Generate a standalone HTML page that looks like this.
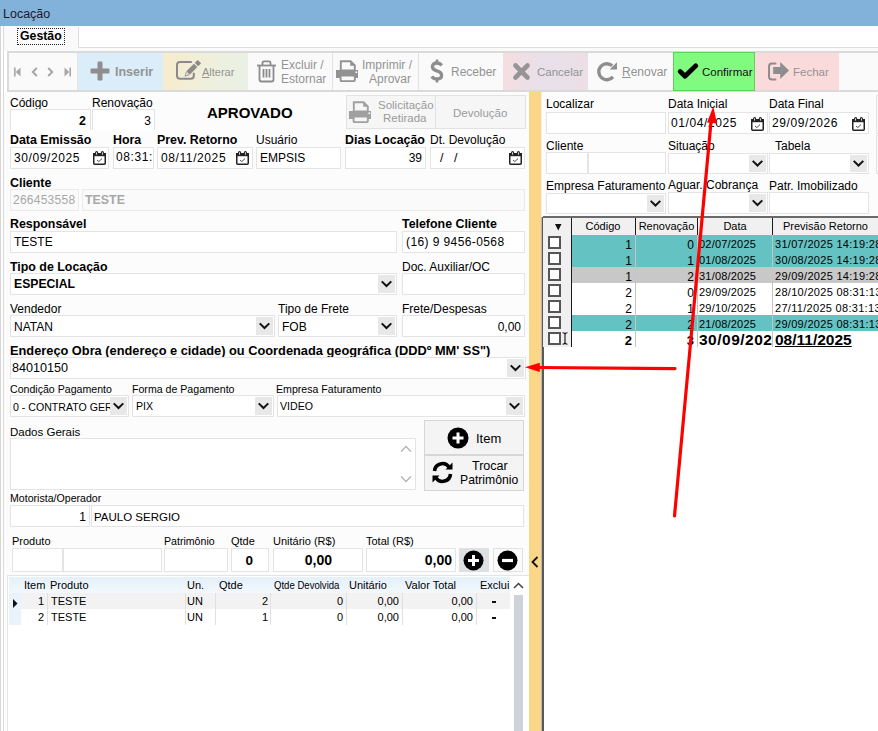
<!DOCTYPE html>
<html><head><meta charset="utf-8">
<style>
html,body{margin:0;padding:0;}
body{width:878px;height:731px;position:relative;overflow:hidden;background:#fff;font-family:"Liberation Sans",sans-serif;color:#000;}
.b{position:absolute;box-sizing:border-box;}
.t{position:absolute;white-space:nowrap;}
svg.b{overflow:visible;}
</style></head><body>

<div class="b" style="left:0px;top:0px;width:878px;height:26px;background:#82b1da;"></div>
<div class="t " style="left:3px;top:7.00px;font-size:12.5px;line-height:15.0px;color:#1a1a2a;">Locação</div>
<div class="b" style="left:0px;top:26px;width:1px;height:705px;background:#d6d6d6;"></div>
<div class="b" style="left:3px;top:26px;width:1px;height:705px;background:#dadada;"></div>
<div class="b" style="left:4px;top:26px;width:874px;height:66px;background:#ffffff;"></div>
<div class="b" style="left:4px;top:26px;width:74px;height:25px;background:#fafafa;"></div>
<div class="b" style="left:78px;top:48px;width:800px;height:3px;background:#fafafa;"></div>
<div class="b" style="left:78px;top:27px;width:1px;height:21px;background:#dedede;"></div>
<div class="b" style="left:79px;top:47px;width:799px;height:1px;background:#dedede;"></div>
<div class="b" style="left:17px;top:28px;width:48px;height:17px;border:1px dotted #222;"></div>
<div class="t " style="left:20px;top:29.00px;font-size:12.3px;line-height:14.76px;font-weight:bold;">Gestão</div>
<div class="b" style="left:7px;top:51px;width:871px;height:41px;background:#fafafa;border:2px solid #dadada;border-right:none;"></div>
<div class="b" style="left:77px;top:53px;width:1px;height:37px;background:#e6e6e6;"></div>
<svg class="b" style="left:14px;top:67px" width="7" height="10" viewBox="0 0 7 10"><rect x="0" y="0.5" width="1.6" height="9" fill="#a6a6a6"/><path d="M6.5 0.5 L1.8 5 L6.5 9.5Z" fill="#a6a6a6"/></svg>
<svg class="b" style="left:31px;top:67px" width="7" height="10" viewBox="0 0 7 10"><path d="M5.8 1 L1.8 5 L5.8 9" fill="none" stroke="#a6a6a6" stroke-width="2"/></svg>
<svg class="b" style="left:47px;top:67px" width="7" height="10" viewBox="0 0 7 10"><path d="M1.2 1 L5.2 5 L1.2 9" fill="none" stroke="#a6a6a6" stroke-width="2"/></svg>
<svg class="b" style="left:64px;top:67px" width="7" height="10" viewBox="0 0 7 10"><path d="M0.5 0.5 L5.2 5 L0.5 9.5Z" fill="#a6a6a6"/><rect x="5.4" y="0.5" width="1.6" height="9" fill="#a6a6a6"/></svg>
<div class="b" style="left:78px;top:53px;width:85px;height:37px;background:#daedf8;"></div>
<svg class="b" style="left:90px;top:61px" width="20" height="20" viewBox="0 0 20 20"><rect x="7.5" y="0.5" width="5" height="19" rx="1.2" fill="#8e8e8e"/><rect x="0.5" y="7.5" width="19" height="5" rx="1.2" fill="#8e8e8e"/></svg>
<div class="t " style="left:115px;top:65.00px;font-size:12.5px;line-height:15.0px;font-weight:bold;color:#939393;">Inserir</div>
<div class="b" style="left:163px;top:53px;width:85px;height:37px;background:linear-gradient(100deg,#f7ebcc 0%,#eef0de 60%,#e9f0e6 100%);"></div>
<svg class="b" style="left:175px;top:60px" width="27" height="22" viewBox="0 0 27 22"><path d="M16.8 2 H5 Q2 2 2 5 V15.8 Q2 18.8 5 18.8 H15.8 Q18.8 18.8 18.8 15.8 V12.8" fill="none" stroke="#8a8a8a" stroke-width="2"/><g transform="translate(9.6 16.4) rotate(-45)"><path d="M0 0 L4.2 -2.4 V2.4Z M4.8 -2.4 H15.6 V2.4 H4.8Z M16.8 -2.4 H20.6 Q21 -2.4 21 -2 V2 Q21 2.4 20.6 2.4 H16.8Z" fill="#8a8a8a" stroke="#f0efdc" stroke-width="0.01"/><path d="M2.2 -0.9 H4.2 V0.9 H2.2Z" fill="#f0efdc"/></g></svg>
<div class="t " style="left:202px;top:66.00px;font-size:11px;line-height:13.2px;color:#939393;"><span style="text-decoration:underline">A</span>lterar</div>
<div class="b" style="left:332px;top:53px;width:1px;height:37px;background:#e2e2e2;"></div>
<div class="b" style="left:418px;top:53px;width:1px;height:37px;background:#e2e2e2;"></div>
<svg class="b" style="left:256px;top:60px" width="21" height="23" viewBox="0 0 21 23"><path d="M1 5.5 H20" stroke="#8c8c8c" stroke-width="1.8"/><path d="M6.5 5.5 V3 Q6.5 1.3 8.2 1.3 H12.8 Q14.5 1.3 14.5 3 V5.5" fill="none" stroke="#8c8c8c" stroke-width="1.8"/><path d="M3.5 5.5 V19.5 Q3.5 21.5 5.5 21.5 H15.5 Q17.5 21.5 17.5 19.5 V5.5" fill="none" stroke="#8c8c8c" stroke-width="1.8"/><path d="M7.5 9 V17.5 M10.5 9 V17.5 M13.5 9 V17.5" stroke="#8c8c8c" stroke-width="1.8"/></svg>
<div class="t " style="left:281px;top:58.00px;font-size:12px;line-height:14.4px;color:#939393;">Excluir /</div>
<div class="t " style="left:281px;top:72.00px;font-size:12px;line-height:14.4px;color:#939393;">Estornar</div>
<svg class="b" style="left:336px;top:60px" width="23" height="22" viewBox="0 0 23 22"><path d="M4.8 1.2 H14.6 L18.8 5.4 V10.5 H4.8Z" fill="none" stroke="#929292" stroke-width="1.9"/><path d="M14.2 1.2 V5.8 H18.8Z" fill="#929292"/><path d="M0 10 H22 V18 H18.8 V15 H4.6 V18 H0Z" fill="#929292"/><rect x="4.6" y="15.5" width="14.2" height="5.6" rx="0.8" fill="none" stroke="#929292" stroke-width="1.9"/><circle cx="20.3" cy="12.3" r="1" fill="#fafafa"/></svg>
<div class="t " style="left:362px;top:58.00px;font-size:12px;line-height:14.4px;color:#939393;">Imprimir /</div>
<div class="t " style="left:369px;top:72.00px;font-size:12px;line-height:14.4px;color:#939393;">Aprovar</div>
<svg class="b" style="left:430px;top:59px" width="14" height="24" viewBox="0 0 14 24"><path d="M7 0.5 V4 M7 20 V23.5" stroke="#8e8e8e" stroke-width="2.6"/><path d="M11.8 6.4 Q9.8 4 7 4 Q2.4 4 2.4 7.8 Q2.4 10.6 6.8 11.8 Q11.6 13.1 11.6 16.2 Q11.6 20 7 20 Q3.8 20 1.8 17.4" fill="none" stroke="#8e8e8e" stroke-width="3.3"/></svg>
<div class="t " style="left:451px;top:65.00px;font-size:12px;line-height:14.4px;color:#939393;">Receber</div>
<div class="b" style="left:503px;top:53px;width:85px;height:37px;background:linear-gradient(100deg,#f6dde0 0%,#e8e0ea 50%,#ecdfe4 100%);"></div>
<svg class="b" style="left:513px;top:63px" width="17" height="17" viewBox="0 0 17 17"><path d="M2.5 2.5 L14.5 14.5 M14.5 2.5 L2.5 14.5" stroke="#959595" stroke-width="4.6" stroke-linecap="round"/></svg>
<div class="t " style="left:537px;top:66.00px;font-size:11.5px;line-height:13.8px;color:#939393;">Cancelar</div>
<svg class="b" style="left:596px;top:61px" width="22" height="22" viewBox="0 0 22 22"><path d="M17.0 15.8 A8 8 0 1 1 16.2 4.8" fill="none" stroke="#8e8e8e" stroke-width="3.4"/><path d="M13.6 8.6 L21 8.6 L21 1.2Z" fill="#8e8e8e"/></svg>
<div class="t " style="left:622px;top:65.00px;font-size:12px;line-height:14.4px;color:#939393;"><span style="text-decoration:underline">R</span>enovar</div>
<div class="b" style="left:673px;top:52px;width:82px;height:39px;background:#80fb80;border:1px solid #5fd05f;"></div>
<svg class="b" style="left:677px;top:63px" width="22" height="18" viewBox="0 0 22 18"><path d="M3.2 8.5 L8 13.3 L18.8 2.8" fill="none" stroke="#000" stroke-width="4.8" stroke-linecap="round" stroke-linejoin="round"/></svg>
<div class="t " style="left:702px;top:66.00px;font-size:11.5px;line-height:13.8px;color:#111;">Confirmar</div>
<div class="b" style="left:755px;top:53px;width:84px;height:37px;background:#fadadb;"></div>
<svg class="b" style="left:767px;top:62px" width="23" height="19" viewBox="0 0 23 19"><path d="M9.3 1.5 H5 Q2 1.5 2 4.5 V14.5 Q2 17.5 5 17.5 H9.3" fill="none" stroke="#8e8e8e" stroke-width="2"/><path d="M6.2 5 H13.2 V0 L22 8.5 L13.2 17 V12 H6.2Z" fill="#8e8e8e"/></svg>
<div class="t " style="left:793px;top:66.00px;font-size:11.5px;line-height:13.8px;color:#939393;">Fechar</div>
<div class="b" style="left:4px;top:92px;width:525px;height:639px;background:#fcfcfc;"></div>
<div class="t " style="left:10px;top:96.00px;font-size:12px;line-height:14.4px;">Código</div>
<div class="t " style="left:92px;top:96.00px;font-size:12px;line-height:14.4px;">Renovação</div>
<div class="b" style="left:10px;top:109px;width:81px;height:21px;background:#fff;border:1px solid #e4e4e4;border-bottom:none;"></div>
<div class="b" style="left:92px;top:109px;width:63px;height:21px;background:#fff;border:1px solid #e4e4e4;border-bottom:none;"></div>
<div class="t " style="right:792px;top:114.00px;font-size:12.4px;line-height:14.88px;font-weight:bold;">2</div>
<div class="t " style="right:727px;top:114.00px;font-size:12px;line-height:14.4px;">3</div>
<div class="t " style="left:207px;top:104.00px;font-size:15px;line-height:18.0px;font-weight:bold;">APROVADO</div>
<div class="b" style="left:346px;top:95px;width:180px;height:34px;background:#f6f6f6;border:1px solid #e2e2e2;"></div>
<div class="b" style="left:435px;top:96px;width:1px;height:32px;background:#e2e2e2;"></div>
<svg class="b" style="left:349px;top:101px" width="23" height="22" viewBox="0 0 23 22"><path d="M4.8 1.2 H14.6 L18.8 5.4 V10.5 H4.8Z" fill="none" stroke="#a0a0a0" stroke-width="1.9"/><path d="M14.2 1.2 V5.8 H18.8Z" fill="#a0a0a0"/><path d="M0 10 H22 V18 H18.8 V15 H4.6 V18 H0Z" fill="#a0a0a0"/><rect x="4.6" y="15.5" width="14.2" height="5.6" rx="0.8" fill="none" stroke="#a0a0a0" stroke-width="1.9"/><circle cx="20.3" cy="12.3" r="1" fill="#f6f6f6"/></svg>
<div class="t " style="left:378px;top:99.00px;font-size:11.5px;line-height:13.8px;color:#9a9a9a;">Solicitação</div>
<div class="t " style="left:383px;top:112.00px;font-size:11.5px;line-height:13.8px;color:#9a9a9a;">Retirada</div>
<div class="t " style="left:453px;top:107.00px;font-size:11.5px;line-height:13.8px;color:#9a9a9a;">Devolução</div>
<div class="t " style="left:10px;top:133.00px;font-size:12.4px;line-height:14.88px;font-weight:bold;">Data Emissão</div>
<div class="t " style="left:113px;top:133.00px;font-size:12.4px;line-height:14.88px;font-weight:bold;">Hora</div>
<div class="t " style="left:157px;top:133.00px;font-size:12.4px;line-height:14.88px;font-weight:bold;">Prev. Retorno</div>
<div class="t " style="left:256px;top:133.00px;font-size:12px;line-height:14.4px;">Usuário</div>
<div class="t " style="left:345px;top:133.00px;font-size:12.4px;line-height:14.88px;font-weight:bold;">Dias Locação</div>
<div class="t " style="left:430px;top:133.00px;font-size:12px;line-height:14.4px;">Dt. Devolução</div>
<div class="b" style="left:10px;top:147px;width:99px;height:22px;background:#fff;border:1px solid #e4e4e4;"></div>
<svg class="b" style="left:93px;top:151px" width="13" height="14" viewBox="0 0 13 14"><rect x="0.75" y="2.75" width="11.5" height="10.5" rx="1" fill="#fff" stroke="#222" stroke-width="1.5"/><rect x="0" y="2" width="13" height="3.2" fill="#222"/><rect x="2.6" y="0.6" width="2" height="3.6" rx="1" fill="#fff" stroke="#222" stroke-width="1.1"/><rect x="8.4" y="0.6" width="2" height="3.6" rx="1" fill="#fff" stroke="#222" stroke-width="1.1"/><path d="M4 9 L5.8 10.6 L9 7.6" fill="none" stroke="#333" stroke-width="0.9"/></svg>
<div class="t " style="left:14px;top:151.00px;font-size:12px;line-height:14.4px;letter-spacing:0.6px;">30/09/2025</div>
<div class="b" style="left:113px;top:147px;width:41px;height:22px;background:#fff;border:1px solid #e4e4e4;"></div>
<div class="t" style="left:116px;top:150px;width:37px;overflow:hidden;font-size:12px;line-height:14px;letter-spacing:0.6px;">08:31:13</div>
<div class="b" style="left:157px;top:147px;width:96px;height:22px;background:#fff;border:1px solid #e4e4e4;"></div>
<svg class="b" style="left:236px;top:151px" width="13" height="14" viewBox="0 0 13 14"><rect x="0.75" y="2.75" width="11.5" height="10.5" rx="1" fill="#fff" stroke="#222" stroke-width="1.5"/><rect x="0" y="2" width="13" height="3.2" fill="#222"/><rect x="2.6" y="0.6" width="2" height="3.6" rx="1" fill="#fff" stroke="#222" stroke-width="1.1"/><rect x="8.4" y="0.6" width="2" height="3.6" rx="1" fill="#fff" stroke="#222" stroke-width="1.1"/><path d="M4 9 L5.8 10.6 L9 7.6" fill="none" stroke="#333" stroke-width="0.9"/></svg>
<div class="t " style="left:161px;top:151.00px;font-size:12px;line-height:14.4px;letter-spacing:0.6px;">08/11/2025</div>
<div class="b" style="left:256px;top:147px;width:85px;height:22px;background:#fff;border:1px solid #e4e4e4;"></div>
<div class="t " style="left:260px;top:151.00px;font-size:12px;line-height:14.4px;">EMPSIS</div>
<div class="b" style="left:345px;top:147px;width:81px;height:22px;background:#fff;border:1px solid #e4e4e4;"></div>
<div class="t " style="right:456px;top:151.00px;font-size:12px;line-height:14.4px;">39</div>
<div class="b" style="left:430px;top:147px;width:95px;height:22px;background:#fff;border:1px solid #e4e4e4;"></div>
<svg class="b" style="left:509px;top:151px" width="13" height="14" viewBox="0 0 13 14"><rect x="0.75" y="2.75" width="11.5" height="10.5" rx="1" fill="#fff" stroke="#222" stroke-width="1.5"/><rect x="0" y="2" width="13" height="3.2" fill="#222"/><rect x="2.6" y="0.6" width="2" height="3.6" rx="1" fill="#fff" stroke="#222" stroke-width="1.1"/><rect x="8.4" y="0.6" width="2" height="3.6" rx="1" fill="#fff" stroke="#222" stroke-width="1.1"/><path d="M4 9 L5.8 10.6 L9 7.6" fill="none" stroke="#333" stroke-width="0.9"/></svg>
<div class="t " style="left:440px;top:151.00px;font-size:12.5px;line-height:15.0px;">/&nbsp;&nbsp;&nbsp;/</div>
<div class="t " style="left:10px;top:176.00px;font-size:12.4px;line-height:14.88px;font-weight:bold;">Cliente</div>
<div class="b" style="left:10px;top:189px;width:69px;height:22px;background:#fafafa;border:1px solid #ebebeb;"></div>
<div class="t " style="left:13px;top:193.00px;font-size:12px;line-height:14.4px;color:#a8a8a8;letter-spacing:0.25px;">266453558</div>
<div class="b" style="left:82px;top:189px;width:443px;height:22px;background:#fafafa;border:1px solid #ebebeb;"></div>
<div class="t " style="left:85px;top:193.00px;font-size:12.4px;line-height:14.88px;font-weight:bold;color:#a8a8a8;">TESTE</div>
<div class="t " style="left:10px;top:217.00px;font-size:12.4px;line-height:14.88px;font-weight:bold;">Responsável</div>
<div class="t " style="left:402px;top:217.00px;font-size:12.4px;line-height:14.88px;font-weight:bold;">Telefone Cliente</div>
<div class="b" style="left:10px;top:231px;width:387px;height:22px;background:#fff;border:1px solid #e4e4e4;"></div>
<div class="t " style="left:14px;top:235.00px;font-size:12px;line-height:14.4px;">TESTE</div>
<div class="b" style="left:402px;top:231px;width:123px;height:22px;background:#fff;border:1px solid #e4e4e4;"></div>
<div class="t " style="left:406px;top:235.00px;font-size:12px;line-height:14.4px;letter-spacing:0.4px;">(16) 9 9456-0568</div>
<div class="t " style="left:10px;top:260.00px;font-size:12.4px;line-height:14.88px;font-weight:bold;">Tipo de Locação</div>
<div class="t " style="left:402px;top:260.00px;font-size:12px;line-height:14.4px;">Doc. Auxiliar/OC</div>
<div class="b" style="left:10px;top:273px;width:387px;height:22px;background:#fff;border:1px solid #e4e4e4;"></div>
<svg class="b" style="left:378px;top:275px;z-index:3" width="17" height="18" viewBox="0 0 17 18"><rect width="17" height="18" fill="#e8e8e8"/><path d="M3.7 6.4 L8.5 11.0 L13.3 6.4" fill="none" stroke="#111" stroke-width="2"/></svg>
<div class="t " style="left:14px;top:277.00px;font-size:12.2px;line-height:14.64px;font-weight:bold;">ESPECIAL</div>
<div class="b" style="left:402px;top:273px;width:123px;height:22px;background:#fff;border:1px solid #e4e4e4;"></div>
<div class="t " style="left:10px;top:302.00px;font-size:12px;line-height:14.4px;">Vendedor</div>
<div class="t " style="left:278px;top:302.00px;font-size:12px;line-height:14.4px;">Tipo de Frete</div>
<div class="t " style="left:402px;top:302.00px;font-size:12px;line-height:14.4px;">Frete/Despesas</div>
<div class="b" style="left:10px;top:315px;width:265px;height:22px;background:#fff;border:1px solid #e4e4e4;"></div>
<svg class="b" style="left:256px;top:317px;z-index:3" width="17" height="18" viewBox="0 0 17 18"><rect width="17" height="18" fill="#e8e8e8"/><path d="M3.7 6.4 L8.5 11.0 L13.3 6.4" fill="none" stroke="#111" stroke-width="2"/></svg>
<div class="t " style="left:14px;top:320.00px;font-size:12px;line-height:14.4px;">NATAN</div>
<div class="b" style="left:278px;top:315px;width:119px;height:22px;background:#fff;border:1px solid #e4e4e4;"></div>
<svg class="b" style="left:378px;top:317px;z-index:3" width="17" height="18" viewBox="0 0 17 18"><rect width="17" height="18" fill="#e8e8e8"/><path d="M3.7 6.4 L8.5 11.0 L13.3 6.4" fill="none" stroke="#111" stroke-width="2"/></svg>
<div class="t " style="left:282px;top:320.00px;font-size:12px;line-height:14.4px;">FOB</div>
<div class="b" style="left:402px;top:315px;width:123px;height:22px;background:#fff;border:1px solid #e4e4e4;"></div>
<div class="t " style="right:357px;top:320.00px;font-size:12px;line-height:14.4px;">0,00</div>
<div class="t " style="left:10px;top:343.00px;font-size:12.8px;line-height:15.36px;font-weight:bold;">Endereço Obra (endereço e cidade) ou Coordenada geográfica (DDDº MM' SS")</div>
<div class="b" style="left:10px;top:357px;width:516px;height:22px;background:#fff;border:1px solid #e4e4e4;"></div>
<svg class="b" style="left:507px;top:359px;z-index:3" width="17" height="18" viewBox="0 0 17 18"><rect width="17" height="18" fill="#e8e8e8"/><path d="M3.7 6.4 L8.5 11.0 L13.3 6.4" fill="none" stroke="#111" stroke-width="2"/></svg>
<div class="t " style="left:12px;top:361.00px;font-size:12.6px;line-height:15.12px;">84010150</div>
<div class="t " style="left:10px;top:383.00px;font-size:10.6px;line-height:12.72px;">Condição Pagamento</div>
<div class="t " style="left:132px;top:383.00px;font-size:10.6px;line-height:12.72px;">Forma de Pagamento</div>
<div class="t " style="left:276px;top:383.00px;font-size:10.6px;line-height:12.72px;">Empresa Faturamento</div>
<div class="b" style="left:10px;top:395px;width:119px;height:22px;background:#fff;border:1px solid #e4e4e4;"></div>
<svg class="b" style="left:110px;top:397px;z-index:3" width="17" height="18" viewBox="0 0 17 18"><rect width="17" height="18" fill="#e8e8e8"/><path d="M3.7 6.4 L8.5 11.0 L13.3 6.4" fill="none" stroke="#111" stroke-width="2"/></svg>
<div class="t" style="left:13px;top:401px;width:105px;overflow:hidden;font-size:10.6px;line-height:13px;">0 - CONTRATO GERAL</div>
<div class="b" style="left:132px;top:395px;width:142px;height:22px;background:#fff;border:1px solid #e4e4e4;"></div>
<svg class="b" style="left:255px;top:397px;z-index:3" width="17" height="18" viewBox="0 0 17 18"><rect width="17" height="18" fill="#e8e8e8"/><path d="M3.7 6.4 L8.5 11.0 L13.3 6.4" fill="none" stroke="#111" stroke-width="2"/></svg>
<div class="t " style="left:136px;top:400.00px;font-size:10.6px;line-height:12.72px;">PIX</div>
<div class="b" style="left:277px;top:395px;width:248px;height:22px;background:#fff;border:1px solid #e4e4e4;"></div>
<svg class="b" style="left:506px;top:397px;z-index:3" width="17" height="18" viewBox="0 0 17 18"><rect width="17" height="18" fill="#e8e8e8"/><path d="M3.7 6.4 L8.5 11.0 L13.3 6.4" fill="none" stroke="#111" stroke-width="2"/></svg>
<div class="t " style="left:280px;top:400.00px;font-size:10.6px;line-height:12.72px;">VIDEO</div>
<div class="t " style="left:10px;top:426.00px;font-size:11.5px;line-height:13.8px;">Dados Gerais</div>
<div class="b" style="left:10px;top:438px;width:406px;height:52px;background:#fff;border:1px solid #e4e4e4;"></div>
<svg class="b" style="left:400px;top:445px" width="12" height="8" viewBox="0 0 12 8"><path d="M1 6.5 L6 1.5 L11 6.5" fill="none" stroke="#b4b4b4" stroke-width="1.4"/></svg>
<svg class="b" style="left:400px;top:475px" width="12" height="8" viewBox="0 0 12 8"><path d="M1 1.5 L6 6.5 L11 1.5" fill="none" stroke="#b4b4b4" stroke-width="1.4"/></svg>
<div class="b" style="left:424px;top:420px;width:100px;height:35px;background:#f4f4f4;border:1px solid #d6d6d6;"></div>
<svg class="b" style="left:447px;top:427px" width="22" height="22" viewBox="0 0 22 22"><circle cx="11" cy="11" r="10.5" fill="#000"/><path d="M11 5.5 V16.5 M5.5 11 H16.5" stroke="#fff" stroke-width="3"/></svg>
<div class="t " style="left:476px;top:431.00px;font-size:13px;line-height:15.6px;">Item</div>
<div class="b" style="left:424px;top:455px;width:100px;height:36px;background:#f4f4f4;border:1px solid #d6d6d6;"></div>
<svg class="b" style="left:431px;top:461px" width="23" height="23" viewBox="0 0 23 23"><path d="M3.5 10 A8 8 0 0 1 18 6" fill="none" stroke="#000" stroke-width="3.6"/><path d="M14.5 8.5 L21.5 8.5 L21.5 1.5Z" fill="#000"/><path d="M19.5 13 A8 8 0 0 1 5 17" fill="none" stroke="#000" stroke-width="3.6"/><path d="M8.5 14.5 L1.5 14.5 L1.5 21.5Z" fill="#000"/></svg>
<div class="t " style="left:472px;top:459.00px;font-size:12.5px;line-height:15.0px;">Trocar</div>
<div class="t " style="left:460px;top:473.00px;font-size:12.2px;line-height:14.64px;">Patrimônio</div>
<div class="t " style="left:10px;top:492.00px;font-size:10.6px;line-height:12.72px;">Motorista/Operador</div>
<div class="b" style="left:10px;top:505px;width:80px;height:22px;background:#fff;border:1px solid #e4e4e4;"></div>
<div class="t " style="right:792px;top:510.00px;font-size:12px;line-height:14.4px;">1</div>
<div class="b" style="left:91px;top:505px;width:433px;height:22px;background:#fff;border:1px solid #e4e4e4;"></div>
<div class="t " style="left:94px;top:511.00px;font-size:11.5px;line-height:13.8px;">PAULO SERGIO</div>
<div class="t " style="left:12px;top:535.00px;font-size:11px;line-height:13.2px;">Produto</div>
<div class="t " style="left:164px;top:535.00px;font-size:10.6px;line-height:12.72px;">Patrimônio</div>
<div class="t " style="left:231px;top:535.00px;font-size:11px;line-height:13.2px;">Qtde</div>
<div class="t " style="left:273px;top:535.00px;font-size:11px;line-height:13.2px;">Unitário (R$)</div>
<div class="t " style="left:366px;top:535.00px;font-size:11px;line-height:13.2px;">Total (R$)</div>
<div class="b" style="left:12px;top:548px;width:51px;height:24px;background:#fff;border:1px solid #e4e4e4;"></div>
<div class="b" style="left:63px;top:548px;width:99px;height:24px;background:#fff;border:1px solid #e4e4e4;"></div>
<div class="b" style="left:164px;top:548px;width:64px;height:24px;background:#fff;border:1px solid #e4e4e4;"></div>
<div class="b" style="left:231px;top:548px;width:38px;height:24px;background:#fff;border:1px solid #e4e4e4;"></div>
<div class="t " style="right:625px;top:553.00px;font-size:13.5px;line-height:16.2px;font-weight:bold;">0</div>
<div class="b" style="left:273px;top:548px;width:90px;height:24px;background:#fff;border:1px solid #e4e4e4;"></div>
<div class="t " style="right:546px;top:552.00px;font-size:14px;line-height:16.8px;font-weight:bold;">0,00</div>
<div class="b" style="left:366px;top:548px;width:90px;height:24px;background:#fff;border:1px solid #e4e4e4;"></div>
<div class="t " style="right:426px;top:552.00px;font-size:14px;line-height:16.8px;font-weight:bold;">0,00</div>
<div class="b" style="left:459px;top:548px;width:30px;height:24px;background:#dde1e4;"></div>
<svg class="b" style="left:463px;top:550px" width="21" height="21" viewBox="0 0 21 21"><circle cx="10.5" cy="10.5" r="10" fill="#000"/><path d="M10.5 5 V16 M5 10.5 H16" stroke="#fff" stroke-width="3"/></svg>
<div class="b" style="left:493px;top:548px;width:30px;height:24px;background:#fafafa;border:1px solid #e2e2e2;"></div>
<svg class="b" style="left:497px;top:550px" width="21" height="21" viewBox="0 0 21 21"><circle cx="10.5" cy="10.5" r="10" fill="#000"/><path d="M5 10.5 H16" stroke="#fff" stroke-width="3.2"/></svg>
<div class="b" style="left:7px;top:575px;width:522px;height:156px;background:#fff;border:1px solid #e4e4e4;border-bottom:none;border-right:none;"></div>
<div class="b" style="left:9px;top:577px;width:501px;height:16px;background:linear-gradient(#e4f0fa,#f3f8fd);"></div>
<div class="b" style="left:9px;top:593px;width:12px;height:32px;background:#eaf3fb;"></div>
<div class="b" style="left:21px;top:593px;width:489px;height:16px;background:#f2f2f2;"></div>
<div class="b" style="left:47px;top:593px;width:1px;height:32px;background:#e0e0e0;"></div>
<div class="b" style="left:185px;top:593px;width:1px;height:32px;background:#e0e0e0;"></div>
<div class="b" style="left:215px;top:593px;width:1px;height:32px;background:#e0e0e0;"></div>
<div class="b" style="left:270px;top:593px;width:1px;height:32px;background:#e0e0e0;"></div>
<div class="b" style="left:346px;top:593px;width:1px;height:32px;background:#e0e0e0;"></div>
<div class="b" style="left:402px;top:593px;width:1px;height:32px;background:#e0e0e0;"></div>
<div class="b" style="left:476px;top:593px;width:1px;height:32px;background:#e0e0e0;"></div>
<svg class="b" style="left:13px;top:599px" width="5" height="9" viewBox="0 0 5 9"><path d="M0 0 L4.5 4.5 L0 9Z" fill="#111"/></svg>
<div class="t " style="left:24px;top:579.00px;font-size:11px;line-height:13.2px;">Item</div>
<div class="t " style="left:50px;top:579.00px;font-size:11px;line-height:13.2px;">Produto</div>
<div class="t " style="left:187px;top:579.00px;font-size:11px;line-height:13.2px;">Un.</div>
<div class="t " style="left:219px;top:579.00px;font-size:11px;line-height:13.2px;">Qtde</div>
<div class="t " style="left:274px;top:579.00px;font-size:11px;line-height:13.2px;transform:scaleX(0.87);transform-origin:0 0;">Qtde Devolvida</div>
<div class="t " style="left:349px;top:579.00px;font-size:11px;line-height:13.2px;">Unitário</div>
<div class="t " style="left:405px;top:579.00px;font-size:11px;line-height:13.2px;">Valor Total</div>
<div class="t" style="left:480px;top:578px;width:29px;overflow:hidden;font-size:11px;line-height:14px;">Excluir</div>
<div class="t " style="right:834px;top:595.00px;font-size:11px;line-height:13.2px;">1</div>
<div class="t " style="left:51px;top:595.00px;font-size:11px;line-height:13.2px;">TESTE</div>
<div class="t " style="left:187px;top:595.00px;font-size:11px;line-height:13.2px;">UN</div>
<div class="t " style="right:610px;top:595.00px;font-size:11px;line-height:13.2px;">2</div>
<div class="t " style="right:535px;top:595.00px;font-size:11px;line-height:13.2px;">0</div>
<div class="t " style="right:479px;top:595.00px;font-size:11px;line-height:13.2px;">0,00</div>
<div class="t " style="right:405px;top:595.00px;font-size:11px;line-height:13.2px;">0,00</div>
<div class="b" style="left:492px;top:601px;width:4px;height:2px;background:#111;"></div>
<div class="t " style="right:834px;top:611.00px;font-size:11px;line-height:13.2px;">2</div>
<div class="t " style="left:51px;top:611.00px;font-size:11px;line-height:13.2px;">TESTE</div>
<div class="t " style="left:187px;top:611.00px;font-size:11px;line-height:13.2px;">UN</div>
<div class="t " style="right:610px;top:611.00px;font-size:11px;line-height:13.2px;">1</div>
<div class="t " style="right:535px;top:611.00px;font-size:11px;line-height:13.2px;">0</div>
<div class="t " style="right:479px;top:611.00px;font-size:11px;line-height:13.2px;">0,00</div>
<div class="t " style="right:405px;top:611.00px;font-size:11px;line-height:13.2px;">0,00</div>
<div class="b" style="left:492px;top:617px;width:4px;height:2px;background:#111;"></div>
<svg class="b" style="left:513px;top:582px" width="11" height="7" viewBox="0 0 11 7"><path d="M1 6 L5.5 1.5 L10 6" fill="none" stroke="#444" stroke-width="1.5"/></svg>
<div class="b" style="left:514px;top:595px;width:9px;height:136px;background:#cdd3d8;"></div>
<div class="b" style="left:529px;top:92px;width:12px;height:639px;background:#fbd687;"></div>
<svg class="b" style="left:531px;top:556px" width="8" height="12" viewBox="0 0 8 12"><path d="M6.5 1 L1.5 6 L6.5 11" fill="none" stroke="#111" stroke-width="1.8"/></svg>
<div class="b" style="left:541px;top:92px;width:337px;height:125px;background:#fcfcfc;"></div>
<div class="b" style="left:541px;top:92px;width:1px;height:125px;background:#eeeeee;"></div>
<div class="t " style="left:546px;top:97.00px;font-size:12px;line-height:14.4px;">Localizar</div>
<div class="t " style="left:668px;top:97.00px;font-size:12px;line-height:14.4px;">Data Inicial</div>
<div class="t " style="left:769px;top:97.00px;font-size:12px;line-height:14.4px;">Data Final</div>
<div class="b" style="left:546px;top:112px;width:120px;height:22px;background:#fff;border:1px solid #e4e4e4;"></div>
<div class="b" style="left:668px;top:112px;width:100px;height:22px;background:#fff;border:1px solid #e4e4e4;"></div>
<svg class="b" style="left:751px;top:117px" width="13" height="14" viewBox="0 0 13 14"><rect x="0.75" y="2.75" width="11.5" height="10.5" rx="1" fill="#fff" stroke="#222" stroke-width="1.5"/><rect x="0" y="2" width="13" height="3.2" fill="#222"/><rect x="2.6" y="0.6" width="2" height="3.6" rx="1" fill="#fff" stroke="#222" stroke-width="1.1"/><rect x="8.4" y="0.6" width="2" height="3.6" rx="1" fill="#fff" stroke="#222" stroke-width="1.1"/><path d="M4 9 L5.8 10.6 L9 7.6" fill="none" stroke="#333" stroke-width="0.9"/></svg>
<div class="t " style="left:671px;top:116.00px;font-size:12px;line-height:14.4px;letter-spacing:0.6px;">01/04/2025</div>
<div class="b" style="left:769px;top:112px;width:100px;height:22px;background:#fff;border:1px solid #e4e4e4;"></div>
<svg class="b" style="left:852px;top:117px" width="13" height="14" viewBox="0 0 13 14"><rect x="0.75" y="2.75" width="11.5" height="10.5" rx="1" fill="#fff" stroke="#222" stroke-width="1.5"/><rect x="0" y="2" width="13" height="3.2" fill="#222"/><rect x="2.6" y="0.6" width="2" height="3.6" rx="1" fill="#fff" stroke="#222" stroke-width="1.1"/><rect x="8.4" y="0.6" width="2" height="3.6" rx="1" fill="#fff" stroke="#222" stroke-width="1.1"/><path d="M4 9 L5.8 10.6 L9 7.6" fill="none" stroke="#333" stroke-width="0.9"/></svg>
<div class="t " style="left:772px;top:116.00px;font-size:12px;line-height:14.4px;letter-spacing:0.6px;">29/09/2026</div>
<div class="b" style="left:876px;top:95px;width:24px;height:39px;background:#fafafa;border:1px solid #e4e4e4;"></div>
<div class="b" style="left:876px;top:135px;width:24px;height:39px;background:#fafafa;border:1px solid #e4e4e4;"></div>
<div class="t " style="left:546px;top:139.00px;font-size:12px;line-height:14.4px;">Cliente</div>
<div class="t " style="left:668px;top:139.00px;font-size:12px;line-height:14.4px;">Situação</div>
<div class="t " style="left:775px;top:139.00px;font-size:12px;line-height:14.4px;">Tabela</div>
<div class="b" style="left:546px;top:152px;width:42px;height:22px;background:#fff;border:1px solid #e4e4e4;"></div>
<div class="b" style="left:588px;top:152px;width:78px;height:22px;background:#fff;border:1px solid #e4e4e4;"></div>
<div class="b" style="left:668px;top:153px;width:100px;height:21px;background:#fff;border:1px solid #e4e4e4;"></div>
<svg class="b" style="left:749px;top:155px;z-index:3" width="17" height="17" viewBox="0 0 17 17"><rect width="17" height="17" fill="#e8e8e8"/><path d="M3.7 5.9 L8.5 10.5 L13.3 5.9" fill="none" stroke="#111" stroke-width="2"/></svg>
<div class="b" style="left:769px;top:153px;width:100px;height:21px;background:#fff;border:1px solid #e4e4e4;"></div>
<svg class="b" style="left:850px;top:155px;z-index:3" width="17" height="17" viewBox="0 0 17 17"><rect width="17" height="17" fill="#e8e8e8"/><path d="M3.7 5.9 L8.5 10.5 L13.3 5.9" fill="none" stroke="#111" stroke-width="2"/></svg>
<div class="t " style="left:546px;top:179.00px;font-size:12px;line-height:14.4px;">Empresa Faturamento</div>
<div class="t " style="left:668px;top:178.00px;font-size:12px;line-height:14.4px;">Aguar. Cobrança</div>
<div class="t " style="left:769px;top:179.00px;font-size:12px;line-height:14.4px;">Patr. Imobilizado</div>
<div class="b" style="left:546px;top:193px;width:120px;height:21px;background:#fff;border:1px solid #e4e4e4;"></div>
<svg class="b" style="left:647px;top:195px;z-index:3" width="17" height="17" viewBox="0 0 17 17"><rect width="17" height="17" fill="#e8e8e8"/><path d="M3.7 5.9 L8.5 10.5 L13.3 5.9" fill="none" stroke="#111" stroke-width="2"/></svg>
<div class="b" style="left:668px;top:192px;width:100px;height:22px;background:#fff;border:1px solid #e4e4e4;"></div>
<svg class="b" style="left:749px;top:194px;z-index:3" width="17" height="18" viewBox="0 0 17 18"><rect width="17" height="18" fill="#e8e8e8"/><path d="M3.7 6.4 L8.5 11.0 L13.3 6.4" fill="none" stroke="#111" stroke-width="2"/></svg>
<div class="b" style="left:769px;top:192px;width:100px;height:22px;background:#fff;border:1px solid #e4e4e4;"></div>
<div class="b" style="left:541px;top:217px;width:337px;height:514px;background:#ffffff;"></div>
<div class="b" style="left:541px;top:217px;width:1px;height:514px;background:#b4b8bc;"></div>
<div class="b" style="left:542px;top:217px;width:2px;height:514px;background:#5a5a5a;"></div>
<div class="b" style="left:543px;top:216px;width:335px;height:2px;background:#6a6a6a;"></div>
<div class="b" style="left:543px;top:218px;width:335px;height:17px;background:#f0f0f0;"></div>
<div class="b" style="left:543px;top:235px;width:28px;height:112px;background:#f0f0f0;"></div>
<div class="b" style="left:571px;top:235px;width:307px;height:16px;background:#64c2c2;"></div>
<div class="b" style="left:571px;top:251px;width:307px;height:16px;background:#64c2c2;"></div>
<div class="b" style="left:571px;top:267px;width:307px;height:16px;background:#c8c8c8;"></div>
<div class="b" style="left:571px;top:283px;width:307px;height:16px;background:#ffffff;"></div>
<div class="b" style="left:571px;top:299px;width:307px;height:16px;background:#ffffff;"></div>
<div class="b" style="left:571px;top:315px;width:307px;height:16px;background:#64c2c2;"></div>
<div class="b" style="left:571px;top:218px;width:1px;height:129px;background:#1a1a1a;"></div>
<div class="b" style="left:635px;top:218px;width:1px;height:17px;background:#1a1a1a;"></div>
<div class="b" style="left:697px;top:218px;width:1px;height:17px;background:#1a1a1a;"></div>
<div class="b" style="left:772px;top:218px;width:1px;height:17px;background:#1a1a1a;"></div>
<div class="b" style="left:635px;top:235px;width:1px;height:112px;background:#c4c4c4;"></div>
<div class="b" style="left:697px;top:235px;width:1px;height:112px;background:#c4c4c4;"></div>
<div class="b" style="left:772px;top:235px;width:1px;height:112px;background:#c4c4c4;"></div>
<svg class="b" style="left:555px;top:224px" width="7" height="7" viewBox="0 0 7 7"><path d="M0 0 H6.5 L3.25 6.5Z" fill="#111"/></svg>
<div class="t " style="left:571px;top:220.00px;font-size:11px;line-height:13.2px;width:64px;text-align:center;">Código</div>
<div class="t " style="left:636px;top:220.00px;font-size:11px;line-height:13.2px;width:61px;text-align:center;">Renovação</div>
<div class="t " style="left:698px;top:220.00px;font-size:11px;line-height:13.2px;width:74px;text-align:center;">Data</div>
<div class="t " style="left:773px;top:220.00px;font-size:11px;line-height:13.2px;width:105px;text-align:center;">Previsão Retorno</div>
<div class="b" style="left:548px;top:236px;width:13px;height:13px;border:2px solid #555;background:#fff"></div>
<div class="t " style="right:246px;top:238.00px;font-size:12px;line-height:14.4px;">1</div>
<div class="t " style="right:184px;top:238.00px;font-size:12px;line-height:14.4px;">0</div>
<div class="t " style="left:699px;top:238.00px;font-size:11px;line-height:13.2px;letter-spacing:0.2px;">02/07/2025</div>
<div class="t " style="left:775px;top:238.00px;font-size:11px;line-height:13.2px;letter-spacing:0.3px;">31/07/2025 14:19:28</div>
<div class="b" style="left:548px;top:252px;width:13px;height:13px;border:2px solid #555;background:#fff"></div>
<div class="t " style="right:246px;top:254.00px;font-size:12px;line-height:14.4px;">1</div>
<div class="t " style="right:184px;top:254.00px;font-size:12px;line-height:14.4px;">1</div>
<div class="t " style="left:699px;top:254.00px;font-size:11px;line-height:13.2px;letter-spacing:0.2px;">01/08/2025</div>
<div class="t " style="left:775px;top:254.00px;font-size:11px;line-height:13.2px;letter-spacing:0.3px;">30/08/2025 14:19:28</div>
<div class="b" style="left:548px;top:268px;width:13px;height:13px;border:2px solid #555;background:#fff"></div>
<div class="t " style="right:246px;top:270.00px;font-size:12px;line-height:14.4px;">1</div>
<div class="t " style="right:184px;top:270.00px;font-size:12px;line-height:14.4px;">2</div>
<div class="t " style="left:699px;top:270.00px;font-size:11px;line-height:13.2px;letter-spacing:0.2px;">31/08/2025</div>
<div class="t " style="left:775px;top:270.00px;font-size:11px;line-height:13.2px;letter-spacing:0.3px;">29/09/2025 14:19:28</div>
<div class="b" style="left:548px;top:284px;width:13px;height:13px;border:2px solid #555;background:#fff"></div>
<div class="t " style="right:246px;top:286.00px;font-size:12px;line-height:14.4px;">2</div>
<div class="t " style="right:184px;top:286.00px;font-size:12px;line-height:14.4px;">0</div>
<div class="t " style="left:699px;top:286.00px;font-size:11px;line-height:13.2px;letter-spacing:0.2px;">29/09/2025</div>
<div class="t " style="left:775px;top:286.00px;font-size:11px;line-height:13.2px;letter-spacing:0.3px;">28/10/2025 08:31:13</div>
<div class="b" style="left:548px;top:300px;width:13px;height:13px;border:2px solid #555;background:#fff"></div>
<div class="t " style="right:246px;top:302.00px;font-size:12px;line-height:14.4px;">2</div>
<div class="t " style="right:184px;top:302.00px;font-size:12px;line-height:14.4px;">1</div>
<div class="t " style="left:699px;top:302.00px;font-size:11px;line-height:13.2px;letter-spacing:0.2px;">29/10/2025</div>
<div class="t " style="left:775px;top:302.00px;font-size:11px;line-height:13.2px;letter-spacing:0.3px;">27/11/2025 08:31:13</div>
<div class="b" style="left:548px;top:316px;width:13px;height:13px;border:2px solid #555;background:#fff"></div>
<div class="t " style="right:246px;top:318.00px;font-size:12px;line-height:14.4px;">2</div>
<div class="t " style="right:184px;top:318.00px;font-size:12px;line-height:14.4px;">2</div>
<div class="t " style="left:699px;top:318.00px;font-size:11px;line-height:13.2px;letter-spacing:0.2px;">21/08/2025</div>
<div class="t " style="left:775px;top:318.00px;font-size:11px;line-height:13.2px;letter-spacing:0.3px;">29/09/2025 08:31:13</div>
<div class="b" style="left:548px;top:332px;width:13px;height:13px;border:2px solid #555;background:#fff"></div>
<svg class="b" style="left:562px;top:332px" width="6" height="13" viewBox="0 0 6 13"><path d="M0.5 0.8 Q3 0.8 3 2.5 Q3 0.8 5.5 0.8 M3 2.5 V10.5 M0.5 12.2 Q3 12.2 3 10.5 Q3 12.2 5.5 12.2" fill="none" stroke="#111" stroke-width="1.1"/></svg>
<div class="t " style="right:246px;top:333.00px;font-size:13px;line-height:15.6px;font-weight:bold;">2</div>
<div class="t " style="right:184px;top:333.00px;font-size:13px;line-height:15.6px;font-weight:bold;">3</div>
<div class="t" style="left:699px;top:331px;width:73px;overflow:hidden;font-size:15.5px;line-height:17px;font-weight:bold;letter-spacing:0.5px;">30/09/2025</div>
<div class="t " style="left:775px;top:331.00px;font-size:15.5px;line-height:18.6px;font-weight:bold;"><u>08/11/2025</u></div>
<svg class="b" style="left:0;top:0" width="878" height="731" viewBox="0 0 878 731"><path d="M674.5 516 L711 122" stroke="#ff0000" stroke-width="3.2" stroke-linecap="round"/><path d="M713.3 106.5 L707 122.5 L717 123.5Z" fill="#ff0000"/><path d="M675 368.6 L538 367.5" stroke="#ff0000" stroke-width="3.2" stroke-linecap="round"/><path d="M525 367.3 L539.8 362.8 L539.8 372Z" fill="#ff0000"/></svg>
</body></html>
